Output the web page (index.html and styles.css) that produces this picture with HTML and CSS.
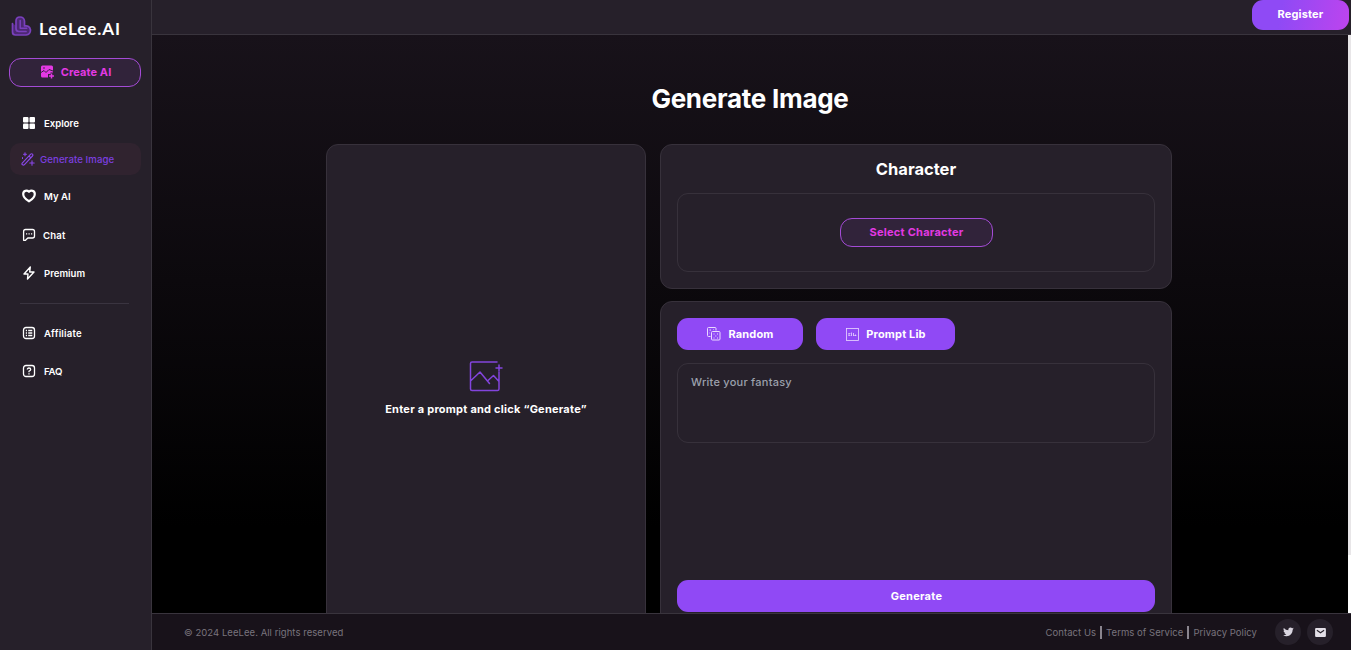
FILE: index.html
```html
<!DOCTYPE html>
<html lang="en">
<head>
  <meta charset="UTF-8" />
  <title>Generate Image - LeeLee.AI</title>
  <link rel="stylesheet" href="styles.css">
</head>
<body>
  <aside class="sidebar">
    <a class="logo">
      <svg width="21" height="21" viewBox="0 0 21 21" fill="none" stroke-linejoin="round" stroke-linecap="round">
        <path d="M1.500 7.500V16Q1.500 19 4.500 19H15Q19.500 18.500 19.500 14Q18.500 9 13.500 10V5Q13 1 9 1Q5 1 5 5V12.500Q5 15.500 8 15.500H15" fill="#4c2873" stroke="#7a40bd" stroke-width="1.700"/>
        <path d="M9.200 4.500V12.200H15.800" stroke="#7a40bd" stroke-width="1.500"/>
      </svg>
      <span>LeeLee.AI</span>
    </a>
    <button type="button" class="outline-btn create">
      <svg width="14" height="14" viewBox="0 0 14 14">
        <path fill="#e339e3" d="M2.500 0.500H11.500Q13 0.500 13 2V7.500H10.500V9H8V12.500H2.500Q1 12.500 1 11V2Q1 0.500 2.500 0.500Z"/>
        <path d="M1 7.500L4 5.500L6 7.500L9 4.500L13 6" fill="none" stroke="#31233a" stroke-width="1"/>
        <circle cx="4" cy="3" r=".8" fill="#31233a"/>
        <path d="M11.500 8.500V13.500M9 11H14" stroke="#e339e3" stroke-width="1.500"/>
      </svg>
      <span>Create AI</span>
    </button>
    <nav class="menu">
      <a class="item">
        <svg width="14" height="14" viewBox="0 0 14 14" fill="#fff"><rect x="1" y="1" width="5.500" height="5.500" rx="1"/><rect x="7.500" y="1" width="5.500" height="5.500" rx="1"/><rect x="1" y="7.500" width="5.500" height="5.500" rx="1"/><rect x="7.500" y="7.500" width="5.500" height="5.500" rx="1"/></svg>
        <span>Explore</span>
      </a>
      <a class="item active">
        <svg width="14" height="14" viewBox="0 0 14 14" fill="none" stroke="#8a48ea" stroke-width="1.100" stroke-linejoin="round" stroke-linecap="round"><path d="M1.200 11.200L9.700 2.200Q10.600 1.400 11.500 2.200Q12.300 3.100 11.500 4L3.200 12.800Q2.300 13.500 1.400 12.700Q.6 12 1.200 11.200ZM8 4L9.800 5.800M4 .8V3.800M2.500 2.300H5.500M11 8.800V13.200M8.800 11H13.200M1.500 5.500V6.500"/></svg>
        <span>Generate Image</span>
      </a>
      <a class="item">
        <svg width="14" height="14" viewBox="0 0 14 14" fill="none" stroke="#fff" stroke-width="2.200" stroke-linejoin="round"><path d="M7 12.300C3.500 10.300 1.200 8 1.200 5C1.200 1.500 5 .8 7 2.800C9 .8 12.800 1.500 12.800 5C12.800 8 10.500 10.300 7 12.300Z"/></svg>
        <span>My AI</span>
      </a>
      <a class="item chat">
        <svg width="14" height="14" viewBox="0 0 14 14" fill="none" stroke="#fff" stroke-width="1.300" stroke-linejoin="round"><path d="M3.500 1.500H10.500Q12.500 1.500 12.500 3.500V8Q12.500 10 10.500 10H5.800L3.500 12.300H1.600V3.500Q1.600 1.500 3.500 1.500Z"/><path d="M4 5.800H5.200M6.500 5.800H7.700M9 5.800H10.200"/></svg>
        <span>Chat</span>
      </a>
      <a class="item">
        <svg width="14" height="14" viewBox="0 0 14 14" fill="none" stroke="#fff" stroke-width="1.400" stroke-linejoin="round"><path d="M8.300 1L2 8H6L5.500 13L12 6H7.700Z"/></svg>
        <span>Premium</span>
      </a>
      <hr>
      <a class="item affiliate">
        <svg width="14" height="14" viewBox="0 0 14 14" fill="none" stroke="#fff" stroke-width="1.300"><rect x="1.500" y="1.500" width="11" height="11" rx="2.500"/><path d="M3.800 4.500H5M6.200 4.500H10.300M3.800 7H5M6.200 7H10.300M3.800 9.500H5M6.200 9.500H10.300"/></svg>
        <span>Affiliate</span>
      </a>
      <a class="item faq">
        <svg width="14" height="14" viewBox="0 0 14 14" fill="none" stroke="#fff" stroke-width="1.300"><rect x="1.500" y="1.500" width="11" height="11" rx="2.500"/><path d="M5.300 5.500Q5.300 4 7 4Q8.700 4 8.700 5.400Q8.700 6.300 7 7.200V8.200M7 9.200V10.500"/></svg>
        <span>FAQ</span>
      </a>
    </nav>
  </aside>

  <div class="page">
    <header class="topbar">
      <button type="button" class="register">Register</button>
    </header>
    <main class="content">
      <div class="scroll-area">
        <h1>Generate Image</h1>
        <div class="panels">
          <section class="card preview">
            <svg width="34" height="32" viewBox="0 0 34 32" fill="none" stroke="#8244dc" stroke-width="1.500" stroke-linejoin="round" stroke-linecap="round">
              <path d="M28 2H3Q1.500 2 1.500 3.500V29Q1.500 30.500 3 30.500H28.500Q30 30.500 30 29V12M1.500 21L11 12L20.500 23.500M19 20.500L24.500 15.500L30 21.500M30 5V11M27 8H33"/>
            </svg>
            <p>Enter a prompt and click “Generate”</p>
          </section>
          <div class="column">
            <section class="card character">
              <h2>Character</h2>
              <div class="picker">
                <button type="button" class="outline-btn select">Select Character</button>
              </div>
            </section>
            <section class="card prompt">
              <div class="actions">
                <button type="button" class="fill-btn random">
                  <svg width="14" height="14" viewBox="0 0 14 14" fill="none" stroke="#ead9ff" stroke-width="1"><path d="M3.500 9.500H1.500Q.5 9.500 .5 8.500V1.500Q.5 .5 1.500 .5H8Q9 .5 9 1.500V3.500M2.500 3H4M2.500 6H3M6.500 2.500H7"/><rect x="4.500" y="4.500" width="8.500" height="8.500" rx="1"/><path d="M6.500 7H7.500M10 7H11M8.300 9H9.300M6.500 11H7.500M10 11H11"/></svg>
                  <span>Random</span>
                </button>
                <button type="button" class="fill-btn lib">
                  <svg width="13" height="13" viewBox="0 0 13 13" fill="none" stroke="#ead9ff" stroke-width="1"><rect x=".5" y=".5" width="12" height="12" stroke-width=".8"/><path d="M3 5V8M5.500 4.500V8M7.500 5V8M9.500 6.500V8" stroke-width=".8"/><path d="M2.500 5.500H4.500M2.500 7.500H4.500M7.500 7.500H10.500" stroke-width=".6"/></svg>
                  <span>Prompt Lib</span>
                </button>
              </div>
              <textarea placeholder="Write your fantasy"></textarea>
              <button type="button" class="fill-btn generate">Generate</button>
            </section>
          </div>
        </div>
      </div>
      <div class="scrollbar"></div>
    </main>
    <footer class="footer">
      <span>© 2024 LeeLee. All rights reserved</span>
      <div class="links">
        <a>Contact Us</a><i></i><a>Terms of Service</a><i></i><a class="privacy">Privacy Policy</a>
        <a class="social">
          <svg width="11" height="10" viewBox="0 0 24 22" fill="#d9d5df"><path d="M23.500 3.500Q22.300 4.100 21 4.200Q22.400 3.200 23 1.600Q21.500 2.400 20 2.700A4.900 4.900 0 0 0 11.700 7.200Q6 6.800 1.700 2Q-.3 6 3.200 8.600L1 8Q1 11.500 4.900 12.800L2.700 12.900Q3.600 16 7.300 16.200Q4.500 18.600.2 18.300Q3.500 20.400 7.700 20.400C16 20.400 21.200 14 21.100 6Q22.700 4.900 23.500 3.500Z"/></svg>
        </a>
        <a class="social">
          <svg width="11" height="9" viewBox="0 0 12 10"><rect width="12" height="10" rx="1.200" fill="#e4e0e8"/><path d="M2 2.500L6 5.300L10 2.500" fill="none" stroke="#27222b" stroke-width="1.200"/></svg>
        </a>
      </div>
    </footer>
  </div>
</body>
</html>
```
FILE: styles.css
```css
* {
  box-sizing: border-box;
}
body {
  margin: 0;
  height: 100vh;
  display: flex;
  overflow: hidden;
  background: #000;
  color: #fff;
  font-family: Inter, sans-serif;
}
button {
  font-family: inherit;
  font-weight: 700;
  font-size: 11px;
  cursor: pointer;
}
svg {
  display: block;
  flex: none;
}
.sidebar {
  width: 152px;
  flex: none;
  background: #26202a;
  border-right: 1px solid #39343d;
  padding: 16px 10px 0 9px;
}
.logo {
  display: flex;
  gap: 7px;
  height: 24px;
  padding-left: 2px;
  font: 700 17px/25px Lato, sans-serif;
  letter-spacing: 0.9px;
}
.outline-btn {
  display: flex;
  align-items: center;
  justify-content: center;
  height: 29px;
  padding: 0 0 2px;
  border: 1px solid #a44bd6;
  border-radius: 12px;
  background: #31233a;
  color: #e339e3;
}
.create {
  width: 132px;
  margin-top: 18px;
  padding-left: 1px;
  gap: 7px;
  letter-spacing: 0.1px;
}
.menu {
  padding-top: 20px;
}
.item {
  display: flex;
  align-items: center;
  gap: 8px;
  height: 32px;
  margin: 0 1px 6px;
  padding-left: 12px;
  border-radius: 10px;
  font-size: 9.6px;
  font-weight: 600;
}
.item.active {
  margin: -2px 0 5px 1px;
  padding-left: 11px;
  gap: 5px;
  background: #30232f;
  color: #7d3fe0;
  font-weight: 500;
  letter-spacing: 0.1px;
}
.item.chat {
  gap: 7px;
  margin-top: 7px;
  letter-spacing: 0.2px;
}
.item.affiliate {
  letter-spacing: 0.2px;
}
.item.faq {
  letter-spacing: -0.2px;
}
.menu hr {
  height: 1px;
  margin: 14px 12px 13px 11px;
  border: 0;
  background: #3a3440;
}
.page {
  flex: 1;
  min-width: 0;
  display: flex;
  flex-direction: column;
}
.topbar {
  height: 35px;
  flex: none;
  display: flex;
  justify-content: flex-end;
  padding-right: 2px;
  background: #26202a;
  border-bottom: 1px solid #39343d;
}
.register {
  width: 97px;
  height: 30px;
  padding: 0 0 2px;
  border: 0;
  border-radius: 11px;
  color: #fff;
  background: linear-gradient(100deg, #8f4af5 30%, #bd44ee);
  letter-spacing: 0.15px;
}
.content {
  flex: 1;
  min-height: 0;
  display: flex;
  background: linear-gradient(#18121a, #000 85%);
}
.scroll-area {
  flex: 1;
  overflow: hidden;
}
.scrollbar {
  width: 3px;
  background: linear-gradient(#e8e6e8 90%, #fff 90%);
}
h1 {
  margin: 48px 0 29px;
  font-size: 26px;
  line-height: 32px;
  font-weight: 700;
  letter-spacing: -0.27px;
  text-align: center;
}
.panels {
  display: grid;
  grid-template-columns: 320px 512px;
  gap: 14px;
  justify-content: center;
  padding-right: 2px;
}
.card {
  background: #26202a;
  border: 1px solid #37313b;
  border-radius: 12px;
}
.preview {
  height: 500px;
  padding-top: 215px;
  text-align: center;
}
.preview svg {
  margin: 0 auto;
}
.preview p {
  margin: 9px 0 0;
  font-size: 11px;
  line-height: 16px;
  font-weight: 700;
  letter-spacing: 0.24px;
}
.column {
  display: flex;
  flex-direction: column;
  gap: 12px;
}
.character {
  height: 145px;
  padding: 14px 16px 0;
}
h2 {
  margin: 0 0 14px;
  font-size: 16.5px;
  line-height: 20px;
  font-weight: 700;
  text-align: center;
}
.picker {
  height: 79px;
  display: flex;
  align-items: center;
  justify-content: center;
  border: 1px solid #37313b;
  border-radius: 11px;
}
.select {
  width: 153px;
  padding-left: 1px;
  letter-spacing: 0.25px;
}
.prompt {
  height: 343px;
  padding: 16px;
}
.actions {
  display: flex;
  gap: 13px;
}
.fill-btn {
  display: flex;
  align-items: center;
  justify-content: center;
  gap: 7px;
  height: 32px;
  padding: 0 0 0 1px;
  border: 0;
  border-radius: 11px;
  background: #9049f5;
  color: #fff;
  letter-spacing: 0.15px;
}
.random {
  width: 126px;
}
.lib {
  width: 139px;
}
textarea {
  display: block;
  width: 100%;
  height: 80px;
  margin: 13px 0 137px;
  padding: 11px 13px;
  border: 1px solid #37313b;
  border-radius: 11px;
  background: transparent;
  color: #fff;
  font: 500 11px/15px Inter, sans-serif;
  letter-spacing: 0.24px;
  resize: none;
}
textarea::placeholder {
  color: #9ca0ad;
}
.generate {
  width: 100%;
  letter-spacing: 0.25px;
}
.footer {
  height: 37px;
  flex: none;
  display: flex;
  align-items: center;
  justify-content: space-between;
  padding: 0 18px 0 32px;
  background: #18121a;
  border-top: 1px solid #39343d;
  color: #79747d;
  font-size: 9.5px;
  letter-spacing: 0.05px;
}
.links {
  display: flex;
  align-items: center;
}
.links i {
  width: 2px;
  height: 13px;
  margin: 0 4px;
  background: #8a858e;
}
.social {
  width: 26px;
  height: 26px;
  display: flex;
  align-items: center;
  justify-content: center;
  margin-left: 6px;
  border-radius: 50%;
  background: #26202a;
}
.privacy {
  margin-right: 12px;
}
```
